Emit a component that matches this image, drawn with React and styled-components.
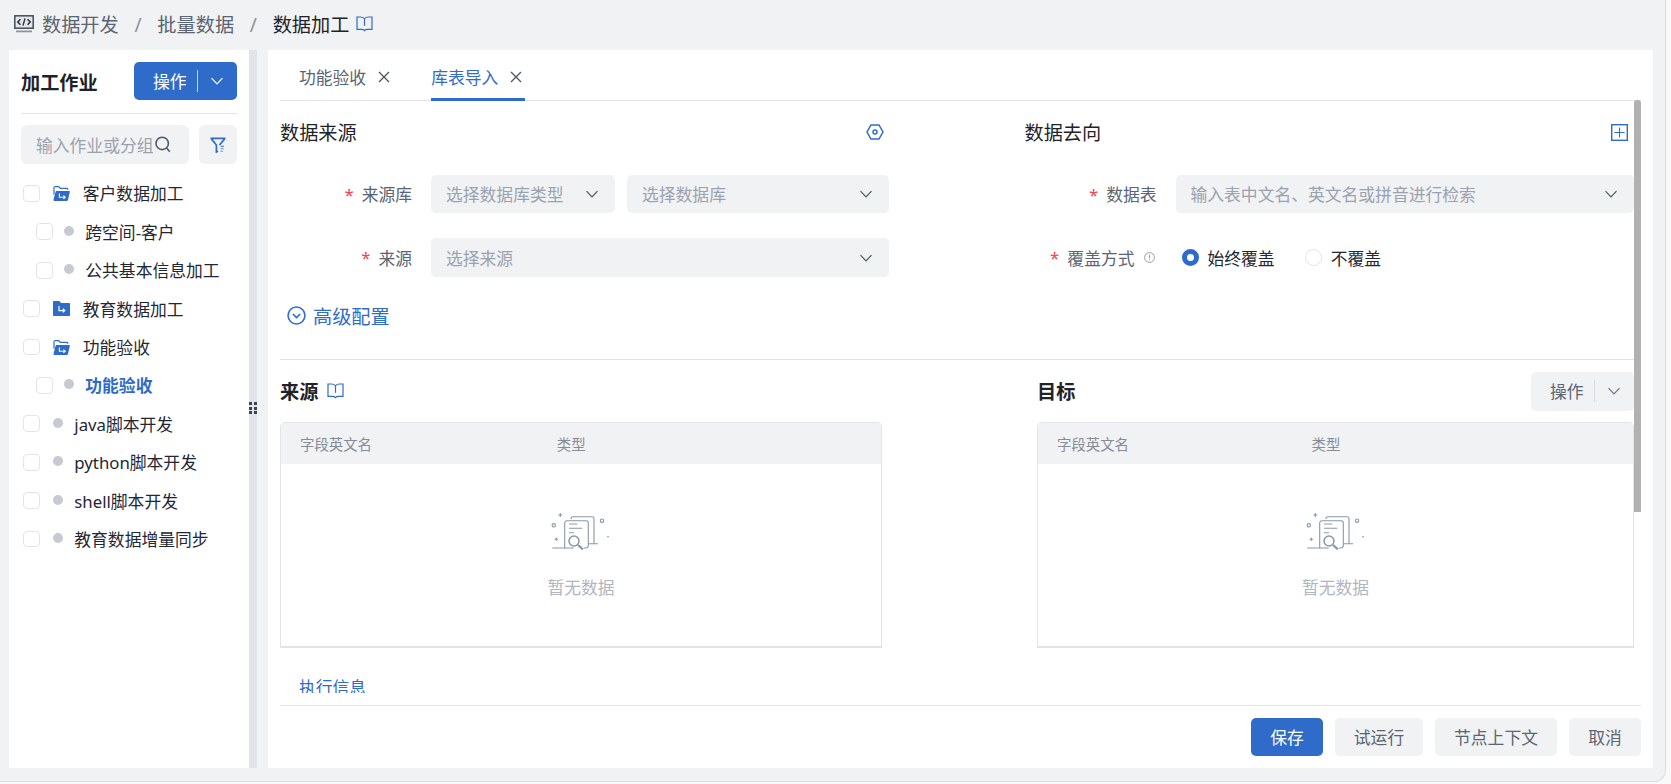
import React from 'react';
import styled, { createGlobalStyle } from 'styled-components';

const blue = '#2f6bc9';
const grayBg = '#f1f2f4';
const line = '#e2e4e9';
const fontStack = '"Noto Sans", "Noto Sans CJK SC", sans-serif';

const GlobalStyle = createGlobalStyle`
  html, body {
    margin: 0;
    padding: 0;
    height: 100%;
    overflow: hidden;
    background: #f9f9f9;
    font-family: ${fontStack};
  }
  * { box-sizing: border-box; }
`;

const Frame = styled.div`
  width: 1666px;
  height: 782px;
  background: ${grayBg};
  border-right: 1px solid #dcdde0;
  border-bottom: 1px solid #dcdde0;
  border-bottom-right-radius: 12px;
  display: flex;
  flex-direction: column;
`;

const Breadcrumb = styled.div`
  height: 50px;
  flex: none;
  padding: 0 0 2px 14px;
  display: flex;
  align-items: center;
  font-size: 19.2px;
  color: #5a6472;
`;

const CrumbSep = styled.span`
  width: 38.6px;
  text-align: center;
  color: #8a93a0;
  font-size: 19.2px;
`;

const CrumbText = styled.span`
  color: ${(p) => (p.$current ? '#1f2329' : '#5a6472')};
`;

const Body = styled.div`
  display: flex;
  align-items: flex-start;
  padding-left: 9px;
  height: 718px;
`;

const Sidebar = styled.aside`
  width: 240px;
  height: 718px;
  flex: none;
  background: #fff;
  padding: 12px 12px 0;
`;

const SideHead = styled.div`
  display: flex;
  align-items: center;
  justify-content: space-between;
  padding-bottom: 12.6px;
  border-bottom: 1px solid ${line};
`;

const SideTitle = styled.h2`
  margin: 0;
  padding-top: 1px;
  font-size: 19.2px;
  font-weight: 700;
  color: #1f2329;
`;

const SplitButton = styled.button`
  display: flex;
  align-items: center;
  height: 38.4px;
  width: ${(p) => p.$width}px;
  padding: 0 0 0 ${(p) => p.$pad}px;
  border: none;
  border-radius: 5px;
  font-family: inherit;
  font-size: 16.8px;
  background: ${(p) => (p.$primary ? blue : grayBg)};
  color: ${(p) => (p.$primary ? '#fff' : '#5a6472')};
`;

const SplitDivider = styled.span`
  width: 1px;
  height: 22px;
  margin: 0 12px 0 10px;
  background: ${(p) => (p.$primary ? 'rgba(255,255,255,.7)' : '#d5d8de')};
`;

const SearchRow = styled.div`
  display: flex;
  justify-content: space-between;
  margin: 11.4px 0 10.5px;
`;

const SearchBox = styled.div`
  width: 168px;
  height: 38.4px;
  padding: 0 0 0 15px;
  display: flex;
  align-items: center;
  gap: 2px;
  background: ${grayBg};
  border-radius: 6px;
  font-size: 16.8px;
  color: #9aa2ae;
  white-space: nowrap;
`;

const FilterButton = styled.button`
  width: 38.4px;
  height: 38.4px;
  padding: 0;
  border: none;
  border-radius: 6px;
  background: ${grayBg};
  display: flex;
  align-items: center;
  justify-content: center;
`;

const TreeRow = styled.div`
  height: 38.4px;
  margin-left: ${(p) => (p.$nested ? 15 : 2)}px;
  display: flex;
  align-items: center;
  font-size: 16.8px;
  color: ${(p) => (p.$active ? blue : '#1f2733')};
  font-weight: ${(p) => (p.$active ? 700 : 400)};
  white-space: nowrap;
`;

const Check = styled.span`
  width: 16.8px;
  height: 16.8px;
  flex: none;
  border: 1.5px solid ${line};
  border-radius: 4px;
  background: #fff;
  margin-right: ${(p) => p.$gap}px;
`;

const Dot = styled.span`
  width: 10px;
  height: 10px;
  flex: none;
  border-radius: 50%;
  background: #c6cad2;
  margin: -2px 11.5px 0 0;
`;

const FolderSlot = styled.span`
  display: flex;
  flex: none;
  margin-right: 13px;
`;

const Splitter = styled.div`
  width: 7.5px;
  height: 718px;
  flex: none;
  background: ${line};
  position: relative;
`;

const Grip = styled.span`
  position: absolute;
  left: 0;
  top: 352px;
  display: grid;
  grid-template-columns: 3px 3px;
  gap: 1.5px;
  & > i {
    width: 3px;
    height: 3px;
    background: #3b4350;
  }
`;

const Main = styled.main`
  width: 1385px;
  height: 718px;
  margin-left: 11.5px;
  flex: none;
  background: #fff;
  padding: 0 12px;
  display: flex;
  flex-direction: column;
  position: relative;
`;

const Tabs = styled.div`
  height: 51px;
  flex: none;
  display: flex;
  gap: 38px;
  padding-left: 19px;
  border-bottom: 1.5px solid ${line};
`;

const Tab = styled.div`
  height: 51px;
  padding: 16px 3px 0 0;
  display: flex;
  align-items: flex-start;
  gap: 12px;
  font-size: 16.8px;
  line-height: 24px;
  color: ${(p) => (p.$active ? blue : '#5a6472')};
  border-bottom: 3px solid ${(p) => (p.$active ? blue : 'transparent')};
  & > svg {
    margin-top: 5px;
  }
`;

const Scroll = styled.div`
  flex: 1;
  min-height: 0;
  overflow: hidden;
  margin-bottom: 12px;
  padding-top: 12px;
`;

const Columns = styled.div`
  display: grid;
  grid-template-columns: ${(p) => p.$cols};
  column-gap: ${(p) => p.$gap}px;
`;

const TitleRow = styled.div`
  height: 38px;
  padding-right: 5.5px;
  display: flex;
  align-items: center;
  justify-content: space-between;
  margin-bottom: 24px;
  font-size: 19.2px;
  color: #1f2329;
`;

const Field = styled.div`
  display: flex;
  align-items: center;
  height: 38.4px;
  margin-bottom: 25px;
`;

const Label = styled.label`
  width: 132px;
  flex: none;
  margin-right: 19px;
  display: flex;
  justify-content: flex-end;
  align-items: center;
  font-size: 16.8px;
  color: #5a6472;
  white-space: nowrap;
  &::before {
    content: '*';
    color: #f5424d;
    margin-right: 8px;
    font-size: 16.8px;
  }
`;

const Selects = styled.div`
  flex: 1;
  display: flex;
  gap: 12px;
`;

const Select = styled.div`
  flex: ${(p) => (p.$width ? `0 0 ${p.$width}px` : '1')};
  height: 38.4px;
  padding: 0 16px 0 15px;
  display: flex;
  align-items: center;
  justify-content: space-between;
  background: ${grayBg};
  border-radius: 5px;
  font-size: 16.8px;
  color: #9aa2ae;
`;

const RadioGroup = styled.div`
  display: flex;
  align-items: center;
  font-size: 16.8px;
  color: #1f2733;
  margin-left: 6px;
`;

const RadioMark = styled.span`
  width: 17px;
  height: 17px;
  border-radius: 50%;
  margin-right: 9px;
  background: #fff;
  border: ${(p) => (p.$on ? `5.5px solid ${blue}` : `1.5px solid ${line}`)};
`;

const RadioText = styled.span`
  margin-right: 30px;
`;

const Advanced = styled.div`
  height: 38px;
  margin-top: -5px;
  padding-left: 7px;
  display: flex;
  align-items: center;
  gap: 7px;
  font-size: 19.2px;
  color: ${blue};
`;

const Divider = styled.div`
  height: 1.5px;
  margin: 24px 0 12px;
  background: ${line};
`;

const TableHead = styled.div`
  height: 38.4px;
  margin-bottom: 11.4px;
  display: flex;
  align-items: center;
  justify-content: space-between;
`;

const TableTitle = styled.h3`
  margin: 0;
  font-size: 19.2px;
  font-weight: 700;
  color: #1f2329;
  display: flex;
  align-items: center;
  gap: 9px;
`;

const Table = styled.div`
  height: 226px;
  border: 1px solid ${line};
  border-bottom-width: 2px;
  border-radius: 5px 5px 0 0;
  display: flex;
  flex-direction: column;
`;

const TableHeader = styled.div`
  height: 41px;
  flex: none;
  padding-left: 19px;
  display: grid;
  grid-template-columns: 44.2% 1fr;
  align-items: center;
  background: ${grayBg};
  font-size: 14.4px;
  color: #858c97;
`;

const Empty = styled.div`
  display: flex;
  flex-direction: column;
  align-items: center;
  padding-top: 48px;
  gap: 24px;
  font-size: 16.8px;
  line-height: 24px;
  color: #b0b5bf;
`;

const ExecInfo = styled.div`
  margin-top: 27.6px;
  padding-left: 19px;
  font-size: 16.8px;
  line-height: 24px;
  color: ${blue};
`;

const Footer = styled.div`
  flex: none;
  padding: 12px 0;
  display: flex;
  justify-content: flex-end;
  gap: 12px;
  border-top: 1.5px solid ${line};
`;

const FooterButton = styled.button`
  width: ${(p) => p.$width}px;
  height: 38.4px;
  padding: 0;
  border: none;
  border-radius: 5px;
  font-family: inherit;
  font-size: 16.8px;
  background: ${(p) => (p.$primary ? blue : grayBg)};
  color: ${(p) => (p.$primary ? '#fff' : '#5a6472')};
`;

const ScrollThumb = styled.div`
  position: absolute;
  top: 50px;
  right: 12.5px;
  width: 7px;
  height: 412px;
  background: #b1b1b1;
  border-radius: 3px 3px 0 0;
`;

const CodeIcon = () => (
  <svg width="20" height="18" viewBox="0 0 20 18" fill="none" style={{ marginRight: 8 }}>
    <rect x="0.8" y="0.8" width="18.4" height="12.4" fill="#e4e6ea" stroke="#4c5562" strokeWidth="1.6" />
    <path d="M6.4 4.2 3.8 7l2.6 2.8M13.6 4.2 16.2 7l-2.6 2.8" stroke="#2b323c" strokeWidth="1.5" />
    <path d="M11 3.4 9 10.6" stroke="#2b323c" strokeWidth="1.4" />
    <path d="M2 16.4h16" stroke="#8d95a1" strokeWidth="1.8" />
  </svg>
);

const BookIcon = ({ size = 17, style }) => (
  <svg width={size} height={size - 1} viewBox="0 0 17 16" fill="none" stroke={blue} strokeWidth="1.2" style={style}>
    <path d="M8.5 2.6C7.4 1.5 6 1 4.4 1H1v12.4h4.6c1.2 0 2.2.4 2.9 1.2.7-.8 1.7-1.2 2.9-1.2H16V1h-3.4C11 1 9.6 1.5 8.5 2.6Z" />
    <path d="M8.5 2.6v7.2" />
  </svg>
);

const Chevron = ({ color = '#4c5562', size = 14 }) => (
  <svg width={size} height={size} viewBox="0 0 14 14" fill="none" stroke={color} strokeWidth="1.2">
    <path d="M1.5 4.2 7 9.8l5.5-5.6" />
  </svg>
);

const SearchIcon = () => (
  <svg width="16" height="17" viewBox="0 0 16 17" fill="none" stroke="#4c5a6a" strokeWidth="1.6" style={{ flex: 'none' }}>
    <circle cx="7.2" cy="7.4" r="6.2" />
    <path d="m11.6 12 3.2 3.8" />
  </svg>
);

const FilterIcon = () => (
  <svg width="16" height="16" viewBox="0 0 16 16" fill="none" stroke={blue} strokeWidth="1.7">
    <path d="M.6 1.4h14.8M1.2 1.6 6.4 8v7l1.6-1" />
    <path d="M14.8 1.6 9.6 8" />
    <path d="M10.6 9.4h3.4M10.6 11.8h3M10.6 14.2h2.4" stroke="#5e8ad2" strokeWidth="1.1" />
  </svg>
);

const FolderOpen = () => (
  <svg width="17" height="15" viewBox="0 0 17 15">
    <path d="M1.4 .6h4.4l1.4 1.7h6.7c.5 0 .9.4.9.9v.6" fill="none" stroke={blue} strokeWidth="1.2" />
    <path d="M1 .8v8" fill="none" stroke={blue} strokeWidth="1.2" />
    <path d="M3.6 5H16c.7 0 1 .5.8 1.1l-1.8 8c-.1.5-.6.9-1.2.9H1.4C.7 15 .3 14.4.5 13.8l2.1-8c.1-.5.5-.8 1-.8Z" fill={blue} />
    <path d="M6.4 7.4v3.8h5.8M10.4 9.6l1.8 1.6-1.8 1.6" fill="none" stroke="#fff" strokeWidth="1.1" />
  </svg>
);

const FolderClosed = () => (
  <svg width="17" height="15" viewBox="0 0 17 15">
    <path d="M1 0h5.4l1.6 2H16c.6 0 1 .4 1 1v11c0 .6-.4 1-1 1H1c-.6 0-1-.4-1-1V1c0-.6.4-1 1-1Z" fill={blue} />
    <path d="M6 5v4.6h5.8M9.8 7.8l2 1.8-2 1.8" fill="none" stroke="#fff" strokeWidth="1.2" />
  </svg>
);

const CloseIcon = () => (
  <svg width="12" height="12" viewBox="0 0 12 12" fill="none" stroke="#4c5562" strokeWidth="1.3">
    <path d="m1 1 10 10M11 1 1 11" />
  </svg>
);

const HexIcon = () => (
  <svg width="18" height="16" viewBox="0 0 18 16" fill="none" stroke={blue} strokeWidth="1.5">
    <path d="M5 1h8l4 7-4 7H5L1 8Z" />
    <circle cx="9" cy="8" r="2" />
  </svg>
);

const PlusBox = () => (
  <svg width="17" height="17" viewBox="0 0 17 17" fill="none" stroke={blue}>
    <rect x="0.7" y="0.7" width="15.6" height="15.6" strokeWidth="1.4" />
    <path d="M8.5 3.4v10.2M3.4 8.5h10.2" strokeWidth="1.1" />
  </svg>
);

const CircleDown = () => (
  <svg width="19" height="19" viewBox="0 0 18 18" fill="none" stroke={blue} strokeWidth="1.5">
    <circle cx="9" cy="9" r="8" />
    <path d="m5.6 7.6 3.4 3.4 3.4-3.4" />
  </svg>
);

const InfoIcon = () => (
  <svg width="11" height="11" viewBox="0 0 11 11" fill="none" stroke="#8a93a0" strokeWidth="0.9" style={{ marginLeft: 9, marginRight: 2 }}>
    <circle cx="5.5" cy="5.5" r="4.9" />
    <path d="M5.5 2.6v3.8M5.5 7.4v1" />
  </svg>
);

const EmptyArt = () => (
  <svg width="60" height="40" viewBox="0 0 60 40" fill="none" stroke="#8b97a8" strokeWidth="1.1">
    <path d="M20 7V6.5c0-1 .8-1.8 1.8-1.8h19.4c1 0 1.8.8 1.8 1.8V31.7" />
    <path d="M33 36h1.8c1.4 0 2.5-1 2.5-2.4V11c0-1.3-1-2.3-2.3-2.3H16c-1.3 0-2.3 1-2.3 2.3v25h9" />
    <path d="M18 12h8.3M18 16.3h13.3M18 20.7h5M37.3 31.7H47M1.3 36h12.4" />
    <circle cx="23" cy="29" r="5" strokeWidth="1.5" />
    <path d="m27 33 5 4.3" strokeWidth="2.2" />
    <circle cx="2.8" cy="13.3" r="1.7" />
    <circle cx="51" cy="8.7" r="1.7" />
    <path d="M9.3 1v4M7.3 3h4M5.3 25.6V29M3.6 27.3h3.4M56 24.7h2" />
  </svg>
);

const treeItems = [
  { name: '客户数据加工', folder: 'open' },
  { name: '跨空间-客户', nested: true },
  { name: '公共基本信息加工', nested: true },
  { name: '教育数据加工', folder: 'closed' },
  { name: '功能验收', folder: 'open' },
  { name: '功能验收', nested: true, active: true },
  { name: 'java脚本开发' },
  { name: 'python脚本开发' },
  { name: 'shell脚本开发' },
  { name: '教育数据增量同步' },
];

const TablePanel = () => (
  <Table>
    <TableHeader>
      <span>字段英文名</span>
      <span>类型</span>
    </TableHeader>
    <Empty>
      <EmptyArt />
      <span>暂无数据</span>
    </Empty>
  </Table>
);

const App = () => (
  <Frame>
    <GlobalStyle />
    <Breadcrumb>
      <CodeIcon />
      <CrumbText>数据开发</CrumbText>
      <CrumbSep>/</CrumbSep>
      <CrumbText>批量数据</CrumbText>
      <CrumbSep>/</CrumbSep>
      <CrumbText $current>数据加工</CrumbText>
      <BookIcon style={{ marginLeft: 7 }} />
    </Breadcrumb>
    <Body>
      <Sidebar>
        <SideHead>
          <SideTitle>加工作业</SideTitle>
          <SplitButton $primary $width={103} $pad={19}>
            操作
            <SplitDivider $primary />
            <Chevron color="#fff" />
          </SplitButton>
        </SideHead>
        <SearchRow>
          <SearchBox>
            输入作业或分组
            <SearchIcon />
          </SearchBox>
          <FilterButton>
            <FilterIcon />
          </FilterButton>
        </SearchRow>
        {treeItems.map((item, i) => (
          <TreeRow key={i} $nested={item.nested} $active={item.active}>
            <Check $gap={item.folder ? 13 : item.nested ? 11 : 13} />
            {item.folder ? (
              <FolderSlot>{item.folder === 'open' ? <FolderOpen /> : <FolderClosed />}</FolderSlot>
            ) : (
              <Dot />
            )}
            {item.name}
          </TreeRow>
        ))}
      </Sidebar>
      <Splitter>
        <Grip>
          {Array.from({ length: 6 }).map((_, i) => (
            <i key={i} />
          ))}
        </Grip>
      </Splitter>
      <Main>
        <Tabs>
          <Tab>
            功能验收
            <CloseIcon />
          </Tab>
          <Tab $active>
            库表导入
            <CloseIcon />
          </Tab>
        </Tabs>
        <Scroll>
          <Columns $cols="609px 609px" $gap={135.5}>
            <div>
              <TitleRow>
                数据来源
                <HexIcon />
              </TitleRow>
              <Field>
                <Label>来源库</Label>
                <Selects>
                  <Select $width={184}>
                    选择数据库类型
                    <Chevron />
                  </Select>
                  <Select>
                    选择数据库
                    <Chevron />
                  </Select>
                </Selects>
              </Field>
              <Field>
                <Label>来源</Label>
                <Selects>
                  <Select>
                    选择来源
                    <Chevron />
                  </Select>
                </Selects>
              </Field>
            </div>
            <div>
              <TitleRow>
                数据去向
                <PlusBox />
              </TitleRow>
              <Field>
                <Label>数据表</Label>
                <Selects>
                  <Select>
                    输入表中文名、英文名或拼音进行检索
                    <Chevron />
                  </Select>
                </Selects>
              </Field>
              <Field>
                <Label>
                  覆盖方式
                  <InfoIcon />
                </Label>
                <RadioGroup>
                  <RadioMark $on />
                  <RadioText>始终覆盖</RadioText>
                  <RadioMark />
                  <span>不覆盖</span>
                </RadioGroup>
              </Field>
            </div>
          </Columns>
          <Advanced>
            <CircleDown />
            高级配置
          </Advanced>
          <Divider />
          <Columns $cols="602px 597px" $gap={155}>
            <div>
              <TableHead>
                <TableTitle>
                  来源
                  <BookIcon />
                </TableTitle>
              </TableHead>
              <TablePanel />
            </div>
            <div>
              <TableHead>
                <TableTitle>目标</TableTitle>
                <SplitButton $width={103} $pad={19}>
                  操作
                  <SplitDivider />
                  <Chevron color="#6d7582" />
                </SplitButton>
              </TableHead>
              <TablePanel />
            </div>
          </Columns>
          <ExecInfo>执行信息</ExecInfo>
        </Scroll>
        <Footer>
          <FooterButton $primary $width={72}>保存</FooterButton>
          <FooterButton $width={88}>试运行</FooterButton>
          <FooterButton $width={122}>节点上下文</FooterButton>
          <FooterButton $width={72}>取消</FooterButton>
        </Footer>
        <ScrollThumb />
      </Main>
    </Body>
  </Frame>
);

export default App;
